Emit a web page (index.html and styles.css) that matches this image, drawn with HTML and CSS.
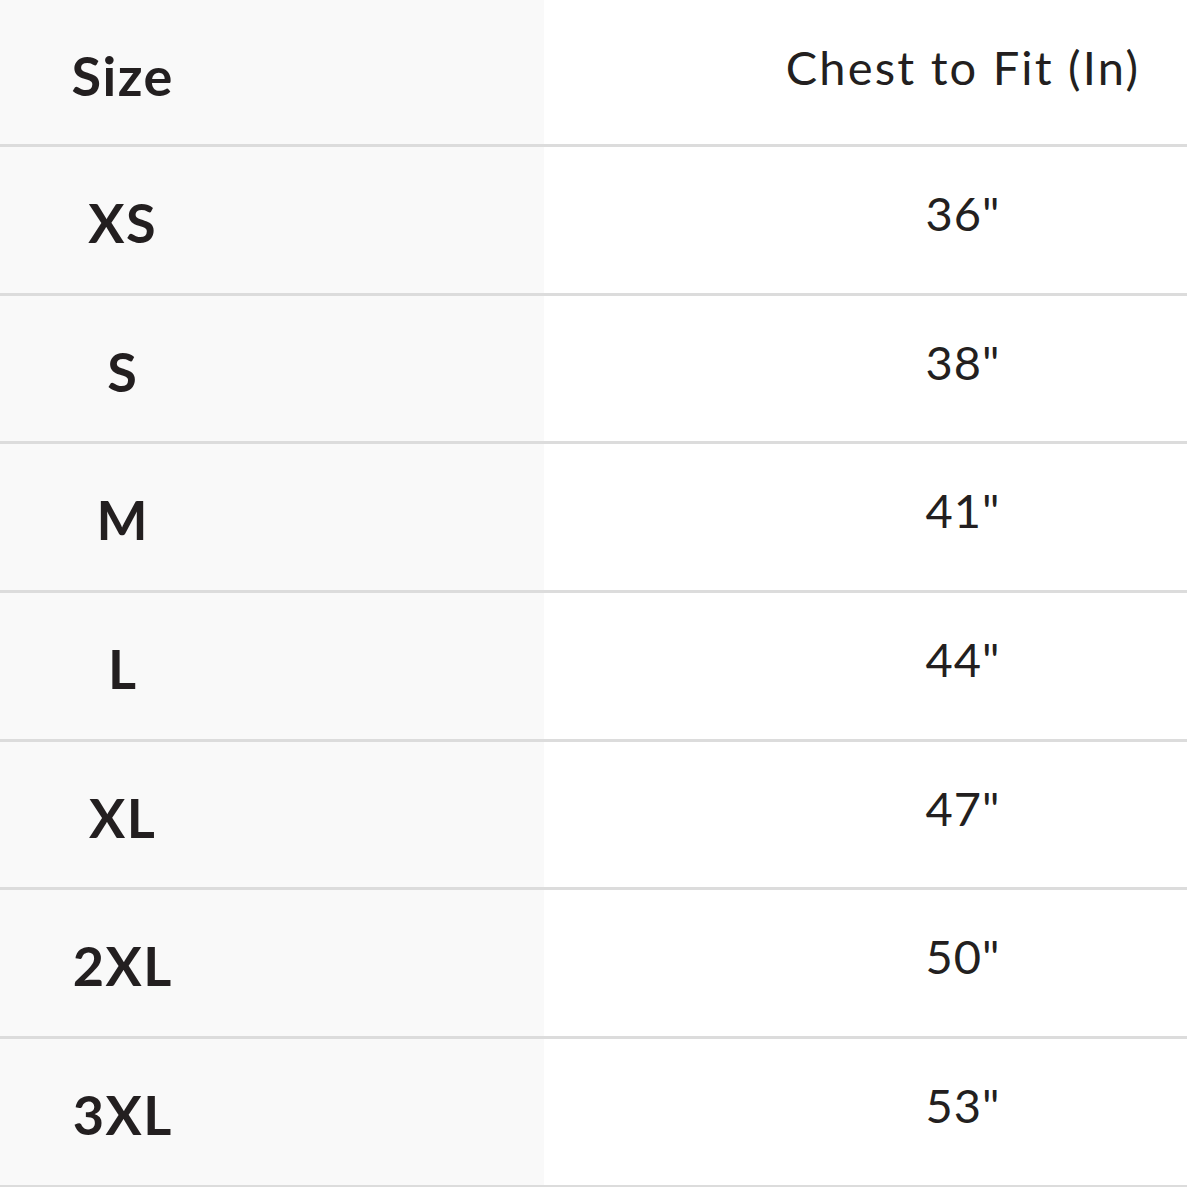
FILE: index.html
```html
<!DOCTYPE html>
<html lang="en">
<head>
<meta charset="utf-8">
<title>Size Chart</title>
<link rel="stylesheet" href="styles.css">
</head>
<body>
<div class="chart">
  <div class="row head">
    <div class="size"><span>Size</span></div>
    <div class="val"><span class="title">Chest to Fit (In)</span></div>
  </div>
  <div class="row"><div class="size"><span>XS</span></div><div class="val"><span>36"</span></div></div>
  <div class="row"><div class="size"><span>S</span></div><div class="val"><span>38"</span></div></div>
  <div class="row"><div class="size"><span>M</span></div><div class="val"><span>41"</span></div></div>
  <div class="row"><div class="size"><span>L</span></div><div class="val"><span>44"</span></div></div>
  <div class="row"><div class="size"><span>XL</span></div><div class="val"><span>47"</span></div></div>
  <div class="row"><div class="size"><span>2XL</span></div><div class="val"><span>50"</span></div></div>
  <div class="row"><div class="size"><span>3XL</span></div><div class="val"><span>53"</span></div></div>
</div>
</body>
</html>
```
FILE: styles.css
```css
html, body {
  margin: 0;
  padding: 0;
  background: #ffffff;
}
body {
  font-family: Lato, "Liberation Sans", sans-serif;
  color: #231f20;
}
.chart {
  width: 1187px;
  display: flex;
  flex-direction: column;
}
.row {
  display: grid;
  grid-template-columns: 544px 1fr;
  height: 148.7px;
  box-sizing: border-box;
  border-bottom: 3px solid #dcdcdc;
}
.row.head {
  height: 147px;
}
.size {
  background: #f9f9f9;
  display: flex;
  justify-content: flex-start;
}
.size span {
  width: 244px;
  text-align: center;
  font-size: 54px;
  font-weight: 700;
  line-height: 1;
  padding-top: 49px;
  letter-spacing: 1.5px;
  text-indent: 1.5px;
}
.val {
  background: #ffffff;
  display: flex;
  padding-left: 199px;
  padding-right: 4px;
}
.val span {
  flex: 1;
  text-align: center;
  font-size: 47px;
  font-weight: 400;
  line-height: 1;
  padding-top: 43px;
  letter-spacing: 1px;
}
.val span.title {
  letter-spacing: 2.2px;
  padding-top: 44px;
}
```
